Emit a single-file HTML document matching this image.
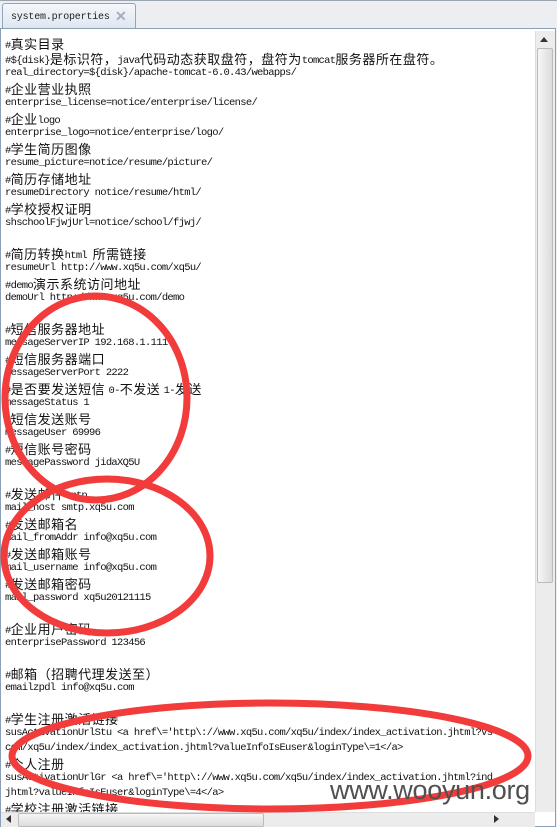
<!DOCTYPE html>
<html><head><meta charset="utf-8"><style>
body{margin:0;width:557px;height:826px;overflow:hidden;background:#eef1f4;position:relative}
.bar{position:absolute;left:0;top:0;width:557px;height:28px;background:#eceef1;border-top:1px solid #9aa5b0}
.tab{position:absolute;left:2px;top:3px;width:132px;height:25px;background:linear-gradient(#f4f7fb,#dde6f0);border:1px solid #8ea6c4;border-bottom:none;border-radius:3px 3px 0 0;font-family:"Liberation Mono",monospace;font-size:10px;letter-spacing:-.2px;color:#222}
.tab span{position:absolute;left:8px;top:8px}
.tab b{position:absolute;left:112px;top:5px;color:#aab;font-size:14px;font-weight:bold;letter-spacing:0}
.ed{position:absolute;left:0;top:28px;width:554px;height:797px;border:1px solid #8aa0b8;background:#fff;overflow:hidden}
.txt{position:absolute;left:4px;top:7px;width:530px;overflow:hidden;font-family:"Liberation Mono",monospace;font-size:10.5px;letter-spacing:-.7px;color:#111}
.txt div{height:15px;line-height:15px;white-space:pre;overflow:hidden}
.c{font-family:"Noto Sans CJK SC",sans-serif;font-size:13px;letter-spacing:.5px;vertical-align:-1px}
.vs{position:absolute;left:535px;top:31px;width:19px;height:781px;background:#ececec;border-left:1px solid #ddd}
.vt{position:absolute;left:537px;top:48px;width:14px;height:533px;background:linear-gradient(90deg,#f6f6f6,#dcdcdc);border:1px solid #bbb;border-radius:2px}
.hs{position:absolute;left:1px;top:812px;width:534px;height:14px;background:#ececec;border-top:1px solid #ddd}
.ht{position:absolute;left:18px;top:813px;width:244px;height:12px;background:linear-gradient(#f6f6f6,#dcdcdc);border:1px solid #bbb;border-radius:2px}
.wm{position:absolute;left:330px;top:775px;font-family:"Liberation Sans",sans-serif;font-size:27px;color:#505050;letter-spacing:-.3px}
</style></head><body>
<div class="bar"></div>
<div class="tab"><span>system.properties</span><b>✕</b></div>
<div class="ed"><div class="txt">
<div>#<span class="c">真实目录</span></div>
<div>#${disk}<span class="c">是标识符，</span>java<span class="c">代码动态获取盘符，盘符为</span>tomcat<span class="c">服务器所在盘符。</span></div>
<div>real_directory=${disk}/apache-tomcat-6.0.43/webapps/</div>
<div>#<span class="c">企业营业执照</span></div>
<div>enterprise_license=notice/enterprise/license/</div>
<div>#<span class="c">企业</span>logo</div>
<div>enterprise_logo=notice/enterprise/logo/</div>
<div>#<span class="c">学生简历图像</span></div>
<div>resume_picture=notice/resume/picture/</div>
<div>#<span class="c">简历存储地址</span></div>
<div>resumeDirectory notice/resume/html/</div>
<div>#<span class="c">学校授权证明</span></div>
<div>shschoolFjwjUrl=notice/school/fjwj/</div>
<div></div>
<div>#<span class="c">简历转换</span>html <span class="c">所需链接</span></div>
<div>resumeUrl http://www.xq5u.com/xq5u/</div>
<div>#demo<span class="c">演示系统访问地址</span></div>
<div>demoUrl http://www.xq5u.com/demo</div>
<div></div>
<div>#<span class="c">短信服务器地址</span></div>
<div>messageServerIP 192.168.1.111</div>
<div>#<span class="c">短信服务器端口</span></div>
<div>messageServerPort 2222</div>
<div>#<span class="c">是否要发送短信 </span>0-<span class="c">不发送 </span>1-<span class="c">发送</span></div>
<div>messageStatus 1</div>
<div>#<span class="c">短信发送账号</span></div>
<div>messageUser 69996</div>
<div>#<span class="c">短信账号密码</span></div>
<div>messagePassword jidaXQ5U</div>
<div></div>
<div>#<span class="c">发送邮件</span>smtp</div>
<div>mail_host smtp.xq5u.com</div>
<div>#<span class="c">发送邮箱名</span></div>
<div>mail_fromAddr info@xq5u.com</div>
<div>#<span class="c">发送邮箱账号</span></div>
<div>mail_username info@xq5u.com</div>
<div>#<span class="c">发送邮箱密码</span></div>
<div>mail_password xq5u20121115</div>
<div></div>
<div>#<span class="c">企业用户密码</span></div>
<div>enterprisePassword 123456</div>
<div></div>
<div>#<span class="c">邮箱（招聘代理发送至）</span></div>
<div>emailzpdl info@xq5u.com</div>
<div></div>
<div>#<span class="c">学生注册激活链接</span></div>
<div>susActivationUrlStu &lt;a href\='http\://www.xq5u.com/xq5u/index/index_activation.jhtml?vs</div>
<div>com/xq5u/index/index_activation.jhtml?valueInfoIsEuser&amp;loginType\=1&lt;/a&gt;</div>
<div>#<span class="c">个人注册</span></div>
<div>susActivationUrlGr &lt;a href\='http\://www.xq5u.com/xq5u/index/index_activation.jhtml?ind</div>
<div>jhtml?valueInfoIsEuser&amp;loginType\=4&lt;/a&gt;</div>
<div>#<span class="c">学校注册激活链接</span></div>
</div></div>
<div class="vs"></div><div class="vt"></div>
<div style="position:absolute;left:540px;top:37px;width:0;height:0;border-left:4px solid transparent;border-right:4px solid transparent;border-bottom:5px solid #333"></div>
<div class="hs"></div><div class="ht"></div>
<div style="position:absolute;left:6px;top:815px;width:0;height:0;border-top:4px solid transparent;border-bottom:4px solid transparent;border-right:5px solid #333"></div>
<div style="position:absolute;left:494px;top:815px;width:0;height:0;border-top:4px solid transparent;border-bottom:4px solid transparent;border-left:5px solid #333"></div>
<svg style="position:absolute;left:0;top:0" width="557" height="826">
<g fill="none" stroke="#f23b3b" stroke-width="7">
<ellipse cx="96" cy="398" rx="91" ry="102"/>
<ellipse cx="107" cy="556" rx="103" ry="77"/>
<ellipse cx="270" cy="756" rx="258" ry="53"/>
</g></svg>
<div class="wm">www.wooyun.org</div>
</body></html>
